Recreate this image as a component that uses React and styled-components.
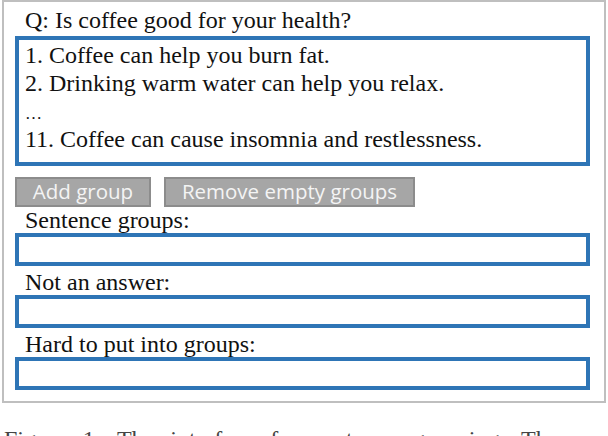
import React from "react";
import styled, { createGlobalStyle } from "styled-components";

const GlobalStyle = createGlobalStyle`
  html, body {
    margin: 0;
    padding: 0;
    background: #ffffff;
    overflow: hidden;
  }
`;

const Page = styled.div`
  width: 608px;
  height: 436px;
  overflow: hidden;
  padding: 0 2px;
  box-sizing: border-box;
  font-family: "Liberation Serif", "Times New Roman", serif;
  color: #111;
`;

const Frame = styled.div`
  width: 604px;
  height: 403px;
  box-sizing: border-box;
  border: 2px solid #bfbfbf;
  padding: 5px 14px 0 11px;
  display: flex;
  flex-direction: column;
`;

const Label = styled.div`
  font-size: 24px;
  line-height: ${(p) => p.h || 27}px;
  height: ${(p) => p.h || 27}px;
  padding-left: 10px;
  white-space: nowrap;
`;

const SentenceBox = styled.div`
  margin-top: 2px;
  border: 4px solid #2e75b6;
  height: 130px;
  box-sizing: border-box;
  padding: 1px 0 0 6px;
  display: flex;
  flex-direction: column;
`;

const Sentence = styled.div`
  font-size: 24px;
  line-height: 28px;
  height: 28px;
  white-space: nowrap;
`;

const Dots = styled.span`
  font-size: 17px;
`;

const Toolbar = styled.div`
  display: flex;
  gap: 13px;
  margin-top: 11px;
  height: 30px;
`;

const GrayButton = styled.div`
  width: ${(p) => p.w}px;
  height: 30px;
  box-sizing: border-box;
  background: #a6a6a6;
  border: 2px solid #8c8c8c;
  color: #f4f4f4;
  font-family: "Open Sans", "Liberation Sans", sans-serif;
  font-size: 20.5px;
  line-height: 25px;
  text-align: center;
  white-space: nowrap;
`;

const GroupBox = styled.div`
  height: 33px;
  box-sizing: border-box;
  border: 4px solid #2e75b6;
  margin-bottom: 3px;
`;

const Caption = styled.div`
  margin-top: 24px;
  padding-left: 2px;
  font-size: 24px;
  line-height: 24px;
  color: #444;
  white-space: nowrap;
  word-spacing: 10px;
`;

const groups = ["Sentence groups:", "Not an answer:", "Hard to put into groups:"];

export default function App() {
  return (
    <Page>
      <GlobalStyle />
      <Frame>
        <Label>Q: Is coffee good for your health?</Label>
        <SentenceBox>
          <Sentence>1. Coffee can help you burn fat.</Sentence>
          <Sentence>2. Drinking warm water can help you relax.</Sentence>
          <Sentence>
            <Dots>…</Dots>
          </Sentence>
          <Sentence>11. Coffee can cause insomnia and restlessness.</Sentence>
        </SentenceBox>
        <Toolbar>
          <GrayButton w={136}>Add group</GrayButton>
          <GrayButton w={251}>Remove empty groups</GrayButton>
        </Toolbar>
        {groups.map((g) => (
          <React.Fragment key={g}>
            <Label h={26}>{g}</Label>
            <GroupBox />
          </React.Fragment>
        ))}
      </Frame>
      <Caption>Figure 1: The interface for sentence grouping. The</Caption>
    </Page>
  );
}
